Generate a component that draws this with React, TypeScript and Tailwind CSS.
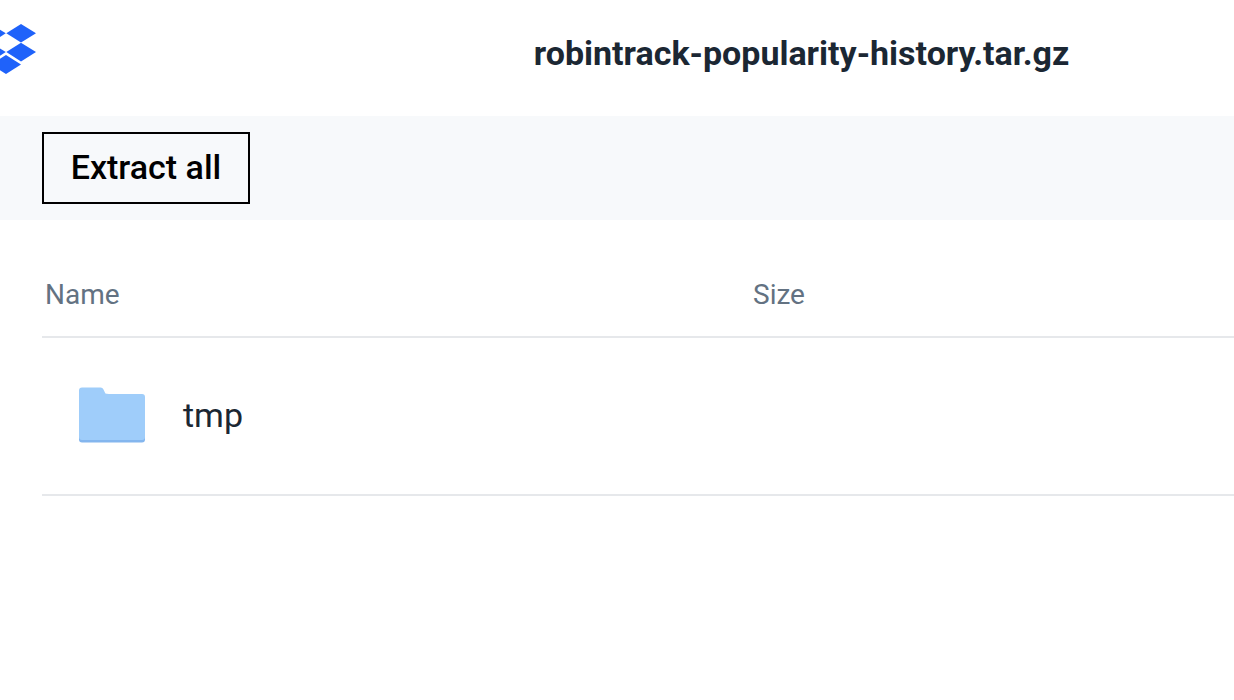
import React from "react";

function Logo() {
  return (
    <svg className="h-[50px] w-9 shrink-0" viewBox="0 24 36 50" fill="#1f62fa" role="img" aria-label="Dropbox">
      <path d="M21 24 36 33.3 21 42.6 6.3 33.3Z" />
      <path d="M21 42.8 36 52 21 61.4 6.3 52Z" />
      <path d="M-9 24 5.8 33.3-9 42.6-24 33.3Z" />
      <path d="M-9 42.8 5.8 52-9 61.4-24 52Z" />
      <path d="M6 55 21 64.5 6 74-9 64.5Z" />
    </svg>
  );
}

function FolderIcon() {
  return (
    <svg className="h-14 w-[66px] shrink-0" viewBox="0 0 66 56" aria-hidden="true">
      <path
        d="M0 4.5V52.5a3 3 0 0 0 3 3H63a3 3 0 0 0 3-3V10Z"
        fill="#84b6ee"
      />
      <path
        d="M0 3.5a3 3 0 0 1 3-3H21.5c1.6 0 2.3.7 3 2L26.6 7H63a3 3 0 0 1 3 3V50a3 3 0 0 1-3 3H3a3 3 0 0 1-3-3Z"
        fill="#9fcdfa"
      />
    </svg>
  );
}

export default function App() {
  return (
    <div className="min-h-screen bg-white font-['Roboto',sans-serif] text-[#1b2733]">
      <header className="flex h-[116px] items-start">
        <div className="pt-6">
          <Logo />
        </div>
        <h1 className="flex-1 whitespace-nowrap pl-[333px] pt-8 text-center text-[34px] font-bold leading-[42px]">
          robintrack-popularity-history.tar.gz
        </h1>
      </header>

      <div className="bg-[#f7f9fb] px-[42px] py-4">
        <button
          type="button"
          className="h-[72px] w-[208px] border-2 border-black pb-[2px] text-[34px] font-medium leading-10 text-black"
        >
          Extract all
        </button>
      </div>

      <main className="pl-[42px] pt-10">
        <table className="w-full table-fixed border-collapse text-left">
          <thead>
            <tr className="h-[77px] border-b-2 border-[#e6e8eb] text-[28px] leading-9 text-[#637282]">
              <th scope="col" className="w-[708px] pb-[6px] pl-[3px] align-middle font-normal">
                Name
              </th>
              <th scope="col" className="pb-[6px] pl-[3px] align-middle font-normal">
                Size
              </th>
            </tr>
          </thead>
          <tbody>
            <tr className="h-[158px] border-b-2 border-[#e6e8eb] text-[34px] leading-10">
              <td className="pb-[2px] pl-[37px]">
                <div className="flex items-center gap-[38px]">
                  <FolderIcon />
                  <span>tmp</span>
                </div>
              </td>
              <td />
            </tr>
          </tbody>
        </table>
      </main>
    </div>
  );
}
